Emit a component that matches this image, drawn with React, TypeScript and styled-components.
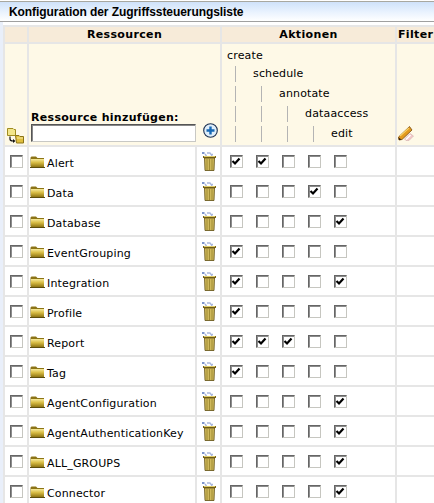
import styled, { createGlobalStyle } from 'styled-components';

const GlobalStyle = createGlobalStyle`
  html, body {
    margin: 0;
    padding: 0;
    background: #fff;
    overflow: hidden;
  }
  body {
    width: 434px;
    height: 503px;
    font-family: "DejaVu Sans", Verdana, sans-serif;
  }
`;

const Page = styled.div`
  width: 434px;
  height: 503px;
  overflow: hidden;
  padding-top: 1px;
  box-sizing: border-box;
`;

const TitleBar = styled.div`
  height: 19px;
  line-height: 20px;
  padding-left: 9px;
  border-top: 1px solid #a8a8a0;
  border-bottom: 1px solid #a0a0a0;
  background: linear-gradient(to bottom, #cfe2fa 0%, #eaf3fe 55%, #ffffff 100%);
  font-family: "Liberation Sans", Arial, sans-serif;
  font-size: 12px;
  font-weight: bold;
  letter-spacing: -0.07px;
  color: #000;
`;

const Body = styled.div`
  padding: 3px 0 0 3px;
  background: linear-gradient(to right, #e9effa 0 3px, #fff 3px);
`;

const Table = styled.table`
  width: 470px;
  table-layout: fixed;
  border-collapse: separate;
  border-spacing: 2px;
  background: #e6e6e6;
  font-size: 11px;
  color: #000;
`;

const HeadCell = styled.th`
  height: 15px;
  padding: 0;
  background: #f7ebd9;
  font-size: 11px;
  font-weight: bold;
  letter-spacing: 0.35px;
  text-align: center;
  line-height: 15px;
  overflow: hidden;
  white-space: nowrap;
`;

const FilterHead = styled(HeadCell)`
  text-align: left;
  padding-left: 1px;
`;

const ConfigCell = styled.td`
  height: 101px;
  padding: 0;
  box-sizing: border-box;
  background: #fef9e7;
  vertical-align: bottom;
`;

const TreeIconCell = styled(ConfigCell)`
  padding: 0 0 1px 2px;
  line-height: 0;
`;

const AddForm = styled.div`
  display: flex;
  align-items: flex-end;
  gap: 7px;
  padding: 0 2px 3px 2px;
`;

const AddField = styled.label`
  display: flex;
  flex-direction: column;
  font-weight: bold;
  letter-spacing: 0.3px;
  line-height: 13px;
`;

const AddInput = styled.input`
  width: 165px;
  height: 18px;
  margin: 0;
  padding: 0 2px;
  box-sizing: border-box;
  border: 1px solid;
  border-color: #555 #c8c8c4 #c8c8c4 #555;
  box-shadow: inset 1px 1px 0 #888;
  background: #fff;
`;

const AddButton = styled.span`
  display: block;
  line-height: 0;
  margin-bottom: 4px;
`;

const ActionTree = styled.div`
  display: flex;
  flex-direction: column;
  height: 101px;
  padding: 3px 0 0 5px;
  box-sizing: border-box;
  letter-spacing: 0.15px;
`;

const TreeRow = styled.div`
  display: flex;
  align-items: center;
  height: 20px;
  line-height: 20px;
  &:first-child {
    height: 17px;
  }
`;

const TreeLine = styled.span`
  flex: none;
  width: 26px;
  height: 16px;
  background: linear-gradient(#b4b4b4, #b4b4b4) 8px 0 / 1px 100% no-repeat;
`;

const PencilCell = styled(ConfigCell)`
  padding: 0 0 4px 1px;
  line-height: 0;
`;

const Cell = styled.td`
  height: 28px;
  padding: 0;
  box-sizing: border-box;
  background: #fff;
  vertical-align: top;
  overflow: hidden;
`;

const SelectCell = styled(Cell)`
  padding: 8px 0 0 5px;
`;

const ResourceName = styled.div`
  display: flex;
  align-items: flex-start;
  gap: 2px;
  padding: 10px 0 0 1px;
  white-space: nowrap;
  letter-spacing: 0.15px;
  line-height: 14px;
`;

const TrashCell = styled(Cell)`
  padding: 5px 0 0 5px;
  line-height: 0;
`;

const ActionCells = styled.div`
  display: flex;
  gap: 13px;
  padding: 8px 0 0 8px;
`;

const Box = styled.span`
  display: block;
  flex: none;
  width: 13px;
  height: 13px;
  box-sizing: border-box;
  border: 1px solid;
  border-color: #666 #c6c6c0 #c6c6c0 #666;
  box-shadow: inset 1px 1px 0 #8c8c8c;
  line-height: 0;
  background: #fff;
`;

const FolderIcon = () => (
  <svg width="15" height="12" viewBox="0 0 15 12" style={{ flex: 'none', marginTop: -1 }}>
    <defs>
      <linearGradient id="folderFill" x1="0" y1="0" x2="0" y2="1">
        <stop offset="0" stopColor="#f6e99a" />
        <stop offset="0.45" stopColor="#d8bc44" />
        <stop offset="1" stopColor="#8f7614" />
      </linearGradient>
    </defs>
    <path d="M0.5 1.5 L1.5 0.5 H6 L7.5 2 H14 V10.5 H0.5 Z" fill="#8c7416" />
    <rect x="1" y="3" width="13" height="8" fill="url(#folderFill)" />
    <rect x="0" y="11" width="15" height="1" fill="#5c4c0c" />
  </svg>
);

const TrashIcon = () => (
  <svg width="15" height="19" viewBox="0 0 15 19">
    <rect x="0" y="0" width="2.5" height="2" fill="#7f96cc" />
    <path d="M3 2 L4.5 4 M5 1 H8 L10 4 M9 2.5 H11" stroke="#a9b7dc" strokeWidth="1.3" fill="none" />
    <rect x="1" y="4" width="13" height="2" fill="#7a6518" />
    <rect x="2" y="4" width="11" height="1" fill="#e0cc6a" />
    <path d="M2.5 6 H12.5 L12 18.5 H3 Z" fill="#d0b95c" stroke="#5e4c10" strokeWidth="0.8" />
    <path d="M5 7 V18 M7.5 7 V18 M10 7 V18" stroke="#a08c34" strokeWidth="1" />
  </svg>
);

const Check = () => (
  <svg width="11" height="11" viewBox="0 0 11 11">
    <path d="M1.5 5 L4 7.5 L8.5 2.5" stroke="#000" strokeWidth="2.2" fill="none" />
  </svg>
);

const MoveFoldersIcon = () => (
  <svg width="17" height="17" viewBox="0 0 17 17">
    <path d="M0.5 1.5 H6 L7 2.5 H8.5 V8.5 H0.5 Z" fill="#f3e68a" stroke="#a08c20" />
    <path d="M3 9.5 V12 Q3 14 6 14 H7" stroke="#111" strokeWidth="1.2" fill="none" />
    <path d="M6 12 L8.5 14 L6 16 Z" fill="#111" />
    <path d="M8.5 8.5 H12 L13 9.5 H16.5 V16 H9.5 Z" fill="#e0bf3e" stroke="#8c7416" />
    <rect x="10" y="10.5" width="6" height="1" fill="#f7eca2" />
  </svg>
);

const PlusIcon = () => (
  <svg width="15" height="15" viewBox="0 0 15 15">
    <circle cx="7.5" cy="7.5" r="6.8" fill="#dfeefa" stroke="#1c3050" strokeWidth="1.1" />
    <path d="M7.5 3.5 V11.5 M3.5 7.5 H11.5" stroke="#1668b4" strokeWidth="2.4" />
  </svg>
);

const PencilIcon = () => (
  <svg width="16" height="16" viewBox="0 0 16 16">
    <path d="M0.5 12 L1 15 L4 14.5 L14 5 L11.5 1.5 Z" fill="#e39a1e" stroke="#7a4a0c" strokeWidth="0.8" />
    <path d="M2 11 L11 3" stroke="#f8d36a" strokeWidth="1.2" />
    <path d="M0.5 12.5 L1 15 L3.5 14.5 Z" fill="#2c1c08" />
    <path d="M6.5 14 L12 8.5 L15.5 11 L11 15.5 H8 Z" fill="#f4c8c8" stroke="#d0b0b0" strokeWidth="0.6" />
    <path d="M8 14.5 L12.5 10" stroke="#fff" strokeWidth="1.6" />
  </svg>
);

const actions = ['create', 'schedule', 'annotate', 'dataaccess', 'edit'];

const resources: { name: string; on: number[] }[] = [
  { name: 'Alert', on: [0, 1] },
  { name: 'Data', on: [3] },
  { name: 'Database', on: [4] },
  { name: 'EventGrouping', on: [0] },
  { name: 'Integration', on: [0, 4] },
  { name: 'Profile', on: [0] },
  { name: 'Report', on: [0, 1, 2] },
  { name: 'Tag', on: [0] },
  { name: 'AgentConfiguration', on: [4] },
  { name: 'AgentAuthenticationKey', on: [4] },
  { name: 'ALL_GROUPS', on: [4] },
  { name: 'Connector', on: [4] },
];

export default function App() {
  return (
    <Page>
      <GlobalStyle />
      <TitleBar>Konfiguration der Zugriffssteuerungsliste</TitleBar>
      <Body>
        <Table>
          <colgroup>
            <col style={{ width: 22 }} />
            <col style={{ width: 166 }} />
            <col style={{ width: 23 }} />
            <col style={{ width: 173 }} />
            <col />
          </colgroup>
          <thead>
            <tr>
              <HeadCell />
              <HeadCell colSpan={2}>Ressourcen</HeadCell>
              <HeadCell>Aktionen</HeadCell>
              <FilterHead>Filter</FilterHead>
            </tr>
            <tr>
              <TreeIconCell>
                <MoveFoldersIcon />
              </TreeIconCell>
              <ConfigCell colSpan={2}>
                <AddForm>
                  <AddField>
                    Ressource hinzufügen:
                    <AddInput type="text" />
                  </AddField>
                  <AddButton>
                    <PlusIcon />
                  </AddButton>
                </AddForm>
              </ConfigCell>
              <ConfigCell>
                <ActionTree>
                  {actions.map((action, i) => (
                    <TreeRow key={action}>
                      {actions.slice(0, i).map((a) => (
                        <TreeLine key={a} />
                      ))}
                      {action}
                    </TreeRow>
                  ))}
                </ActionTree>
              </ConfigCell>
              <PencilCell>
                <PencilIcon />
              </PencilCell>
            </tr>
          </thead>
          <tbody>
            {resources.map((res) => (
              <tr key={res.name}>
                <SelectCell>
                  <Box />
                </SelectCell>
                <Cell>
                  <ResourceName>
                    <FolderIcon />
                    {res.name}
                  </ResourceName>
                </Cell>
                <TrashCell>
                  <TrashIcon />
                </TrashCell>
                <Cell>
                  <ActionCells>
                    {actions.map((a, i) => (
                      <Box key={a}>{res.on.includes(i) && <Check />}</Box>
                    ))}
                  </ActionCells>
                </Cell>
                <Cell />
              </tr>
            ))}
          </tbody>
        </Table>
      </Body>
    </Page>
  );
}
